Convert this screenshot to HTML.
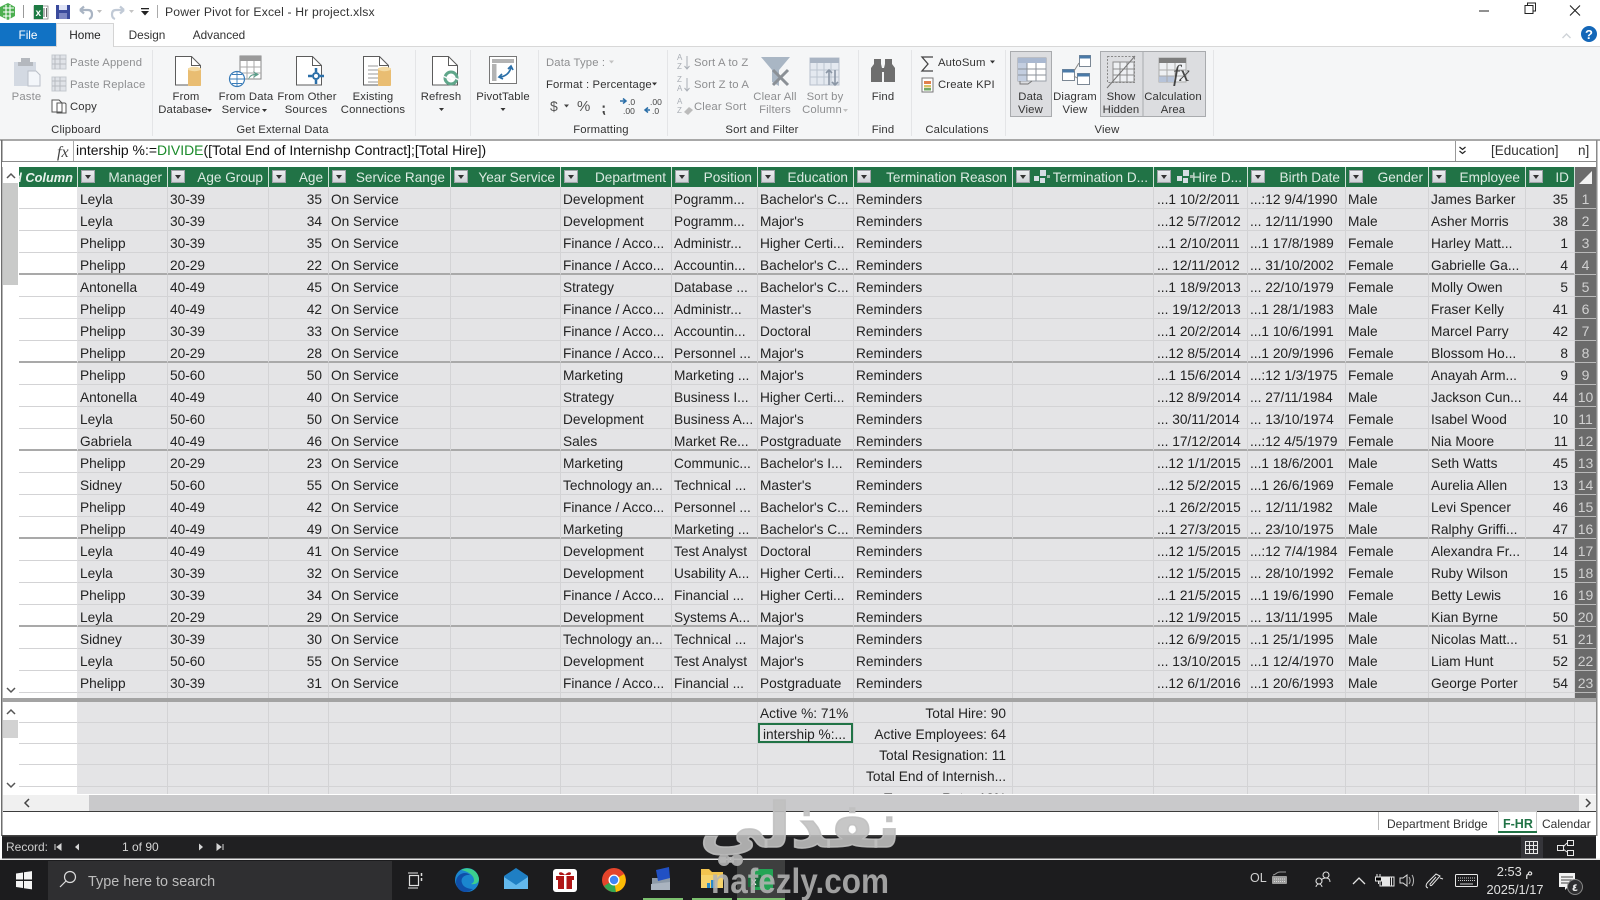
<!DOCTYPE html>
<html><head><meta charset="utf-8"><title>Power Pivot for Excel - Hr project.xlsx</title>
<style>
html,body{margin:0;padding:0;background:#fff;}
body{width:1600px;height:900px;overflow:hidden;position:relative;font-family:"Liberation Sans","Noto Sans CJK SC",sans-serif;color:#222;}
svg{position:absolute;left:0;top:0;font-family:"Liberation Sans",sans-serif;}
svg text{white-space:pre;}
.r{font-size:11.3px;fill:#333;letter-spacing:.15px;}
.g{font-size:11.3px;fill:#8e8f91;letter-spacing:.15px;}
.m{text-anchor:middle;}
.wrap{position:absolute;overflow:hidden;left:19px;width:1577px;}
table{border-collapse:separate;border-spacing:0;table-layout:fixed;width:1577px;}
td,th{box-sizing:border-box;white-space:nowrap;overflow:hidden;font-weight:normal;}
td{height:22px;padding:4px 3px 0 2px;font-size:13.7px;line-height:17px;vertical-align:top;background:#e4e4e6;border-right:1px solid #d3d3d5;border-bottom:1px solid #d3d3d5;text-align:left;color:#222;}
td:nth-child(1){background:#fff;border-right:1px solid #e4e4e6;}
td:nth-child(4),td:nth-child(16){text-align:right;padding-right:6px;}
td:nth-child(12){padding-left:3px;}
td:nth-child(17){background:#6b6b6b;color:#d0d0d0;text-align:center;padding:4px 0 0;font-size:14px;border-right:0;border-bottom:1px solid #b9b9b9;}
tr.k td{border-bottom-color:#a9a9a9;box-shadow:inset 0 -1px 0 #a9a9a9;}
tr.k td:nth-child(17){border-bottom-color:#b9b9b9;box-shadow:none;}
th{height:20px;padding:0 5px 0 3px;font-size:13.6px;line-height:19px;background:#217346;color:#dceae2;text-align:right;border-right:1px solid #cfe0d6;position:relative;}
th:nth-child(17){background:#6b6b6b;border-right:0;padding:0;}
th i{position:absolute;left:3px;top:3px;width:14px;height:13px;box-sizing:border-box;background:linear-gradient(#eceef1,#cfd1d6);border:1px solid #9fa3a8;}
th i::after{content:"";position:absolute;left:3px;top:4px;border:3.5px solid transparent;border-top:4px solid #333;border-bottom:0;}
#c td{height:21px;padding-top:2.5px;background:#e4e4e6;}
#c td:nth-child(1){background:#fff;}
#c td:nth-child(17){background:#e4e4e6;border-bottom:1px solid #d3d3d5;}
#c td.x{text-align:right;padding-right:6px;}
#c tr.t td{height:22px;}
</style></head><body>

<svg width="1600" height="900" viewBox="0 0 1600 900">
<rect width="1600" height="900" fill="#fff"/>
<!-- ribbon bg -->
<rect x="0" y="47" width="1600" height="92" fill="#f5f6f7"/>
<rect x="0" y="46" width="1600" height="1" fill="#d8d8d8"/>
<rect x="0" y="139" width="1600" height="2" fill="#a8a8a8"/>
<g fill="#e4e5e7"><rect x="152" y="50" width="1" height="86"/><rect x="415" y="50" width="1" height="86"/><rect x="470" y="50" width="1" height="86"/><rect x="538" y="50" width="1" height="86"/><rect x="667" y="50" width="1" height="86"/><rect x="858" y="50" width="1" height="86"/><rect x="911" y="50" width="1" height="86"/><rect x="1005" y="50" width="1" height="86"/><rect x="1213" y="50" width="1" height="86"/></g>
<!-- title bar -->
<g>
<path d="M8 3l7 4v9l-7 4-8-4V7z" fill="#4caf50"/><path d="M3 8h11M3 12h11M3 16h8M6 5v14M10 5v14" stroke="#fff" stroke-width="1.1" fill="none"/>
<rect x="23" y="5" width="1" height="13" fill="#999"/>
<rect x="34" y="6" width="14" height="13" fill="#fff" stroke="#666" stroke-width=".6"/><rect x="34" y="5" width="9" height="14" fill="#1d7a43"/><text x="35.5" y="16" font-size="10" font-weight="bold" fill="#fff">x</text><path d="M44 8v9M46.5 8v9" stroke="#666"/>
<rect x="56" y="5" width="14" height="14" fill="#3a4a9c"/><rect x="59" y="5" width="8" height="5" fill="#dfe3f5"/><rect x="59" y="13" width="8" height="6" fill="#7d87c4"/>
<path d="M80 10l4-3.5M80 10l4 3.5M80.5 10H88c3 0 4 2 4 4.5s-1.5 4-3 4.500" stroke="#a9b4c3" stroke-width="2.200" fill="none"/><path d="M97 11l5 0-2.500 3z" fill="#bdbdbd" transform="translate(0,-1)"/>
<path d="M124 10l-4-3.500M124 10l-4 3.500M123.500 10H116c-3 0-4 2-4 4.500s1.500 4 3 4.500" stroke="#c1cad6" stroke-width="2.200" fill="none"/><path d="M129 10l5 0-2.500 3z" fill="#c4c4c4"/>
<rect x="141" y="8" width="8" height="1.300" fill="#222"/><path d="M141 11h8l-4 4.500z" fill="#222"/>
<rect x="157" y="5" width="1" height="13" fill="#aaa"/>
<text x="165" y="16" font-size="12.200" fill="#333" letter-spacing=".15">Power Pivot for Excel - Hr project.xlsx</text>
<rect x="1479" y="10.500" width="10" height="1" fill="#222"/>
<path d="M1525 13.500h8v-8h-8zM1527.500 5.500v-2.500h8v8h-2.500" stroke="#222" fill="none"/>
<path d="M1570 5.500l10 10M1580 5.500l-10 10" stroke="#222" stroke-width="1.100"/>
<path d="M1562.500 38l4-4 4 4" stroke="#cfd3d8" stroke-width="1.400" fill="none"/>
<circle cx="1589" cy="34" r="8" fill="#1467b8"/><text x="1589" y="39" font-size="13" font-weight="bold" fill="#fff" text-anchor="middle">?</text>
</g>
<!-- tabs -->
<rect x="0" y="23" width="56" height="23" fill="#1172c4"/>
<text x="28" y="39" font-size="11.800" fill="#fff" class="m" text-anchor="middle">File</text>
<path d="M56.500 46V23.500h57V47" fill="#f5f6f7" stroke="#d4d4d4"/><rect x="57" y="44" width="56" height="4" fill="#f5f6f7"/>
<text x="85" y="39" font-size="11.800" fill="#222" text-anchor="middle">Home</text>
<text x="147" y="39" font-size="11.800" fill="#333" text-anchor="middle">Design</text>
<text x="219" y="39" font-size="11.800" fill="#333" text-anchor="middle">Advanced</text>

<!-- clipboard -->
<g>
<rect x="14" y="62" width="22" height="24" fill="#d3d9e2"/><rect x="21" y="58" width="9" height="6" fill="#b4b8be"/><rect x="18" y="62" width="15" height="4" fill="#b4b8be"/>
<path d="M28 71h8l4 4v11H28z" fill="#f3f6fa" stroke="#b9bfc8"/>
<text x="26.500" y="100" class="g" text-anchor="middle">Paste</text>
<rect x="52" y="55" width="14" height="14" fill="#e0e3e8" stroke="#c5c9cf"/><path d="M55 55v14M52 59h14M52 64h14M60 55v14" stroke="#b7bbc1"/>
<text x="70" y="66" class="g">Paste Append</text>
<rect x="52" y="77" width="14" height="14" fill="#e0e3e8" stroke="#c5c9cf"/><path d="M55 77v14M52 81h14M52 86h14M60 77v14" stroke="#b7bbc1"/>
<text x="70" y="88" class="g">Paste Replace</text>
<path d="M52 100h7l3 3v9H52zM57 103h8l1 1v9h-9z" fill="#fff" stroke="#555"/>
<text x="70" y="110" class="r">Copy</text>
<text x="76" y="133" class="r" text-anchor="middle">Clipboard</text>
</g>
<!-- doc icons -->
<g stroke="#5c5c5c" fill="#fff">
<path d="M175.500 56.500h16l9 9v19.500h-25z"/><path d="M191.500 56.500v9h9" fill="none"/>
<path d="M296.500 56.500h16l9 9v19.500h-25z"/><path d="M312.500 56.500v9h9" fill="none"/>
<path d="M363.500 56.500h16l9 9v19.500h-25z"/><path d="M379.500 56.500v9h9" fill="none"/>
<path d="M432.500 56.500h16l9 9v19.500h-25z"/><path d="M448.500 56.500v9h9" fill="none"/>
</g>
<path d="M368 66h10M368 70h18M368 74h12M368 78h12M368 82h12" stroke="#9a9a9a"/>
<g fill="#e9bd72"><rect x="188" y="68" width="13" height="18" rx="1"/><ellipse cx="194.500" cy="69" rx="6.500" ry="2.200" fill="#f4dba5"/><rect x="378" y="68" width="13" height="18" rx="1"/><ellipse cx="384.500" cy="69" rx="6.500" ry="2.200" fill="#f4dba5"/></g>
<!-- data service -->
<rect x="240" y="56" width="21" height="23" fill="#fff" stroke="#888"/><rect x="240" y="56" width="21" height="5" fill="#9a9a9a"/><path d="M247 61v18M254 61v18M240 67h21M240 73h21" stroke="#aaa"/>
<circle cx="237" cy="79" r="7.500" fill="#fff" stroke="#3a7cb8" stroke-width="1.200"/><path d="M229.500 79h15M237 71.500v15M232 74.500h10M232 83.500h10" stroke="#3a7cb8" stroke-width=".9"/>
<path d="M248 80c1-4 3-6 7-6l-2-3 6 3.500-6 3.500 2-3c-3 0-5 2-7 5z" fill="#5a9e8a"/>
<!-- other sources -->
<path d="M316 72l4 4-4 4-4-4zM308 72h4" fill="#2b6fa8"/><circle cx="316" cy="76" r="3" fill="#fff" stroke="#2b6fa8" stroke-width="2"/><path d="M316 68v4M316 80v4M308 76h4M320 76h4" stroke="#2b6fa8" stroke-width="2.500"/>
<!-- refresh -->
<circle cx="451" cy="78" r="6" fill="none" stroke="#5fa68a" stroke-width="3"/><path d="M443 76l8 4M459 80l-8-4" stroke="#f5f6f7" stroke-width="1.500"/>
<!-- pivot -->
<rect x="489.500" y="56.500" width="27" height="27" fill="#fff" stroke="#777"/><rect x="492" y="59" width="22" height="4" fill="#b3b3b3"/><rect x="492" y="64" width="4.500" height="17" fill="#b3b3b3"/>
<path d="M499 77c6 0 11-4 12-10M508 69l3-3 2 4M502 74l-3 3 4 2" stroke="#2b6fa8" stroke-width="1.700" fill="none"/>
<!-- Labels -->
<text x="186" y="100" class="r" text-anchor="middle">From</text><text x="183" y="113" class="r" text-anchor="middle">Database</text><path d="M207 109h5l-2.500 3z" fill="#333"/>
<text x="246" y="100" class="r" text-anchor="middle">From Data</text><text x="241" y="113" class="r" text-anchor="middle">Service</text><path d="M262 109h5l-2.500 3z" fill="#333"/>
<text x="307" y="100" class="r" text-anchor="middle">From Other</text><text x="306" y="113" class="r" text-anchor="middle">Sources</text>
<text x="373" y="100" class="r" text-anchor="middle">Existing</text><text x="373" y="113" class="r" text-anchor="middle">Connections</text>
<text x="282.500" y="133" class="r" text-anchor="middle">Get External Data</text>
<text x="441" y="100" class="r" text-anchor="middle">Refresh</text><path d="M439 108h5l-2.500 3z" fill="#333"/>
<text x="503" y="100" class="r" text-anchor="middle">PivotTable</text><path d="M500.500 108h5l-2.500 3z" fill="#333"/>
<!-- formatting -->
<text x="546" y="66" class="g">Data Type :</text><path d="M609 60.500h5l-2.500 3z" fill="#c2c2c2"/>
<text x="546" y="88" class="r">Format : Percentage</text><path d="M652 82.500h5l-2.500 3z" fill="#333"/>
<text x="550" y="111" font-size="14" fill="#555">$</text><path d="M564 104.500h5l-2.500 3z" fill="#444"/>
<text x="577" y="111" font-size="15" fill="#555">%</text>
<text x="601" y="113" font-size="14" font-weight="bold" fill="#444">&#8271;</text>
<path d="M620 101h5M623 98.500l3 2.500-3 2.500" stroke="#2b6fa8" stroke-width="1.500" fill="none"/><text x="628" y="105" font-size="8.500" fill="#444">.0</text><text x="623" y="114" font-size="8.500" fill="#444">.00</text>
<path d="M650 110h-5M648 107.500l-3 2.500 3 2.500" stroke="#2b6fa8" stroke-width="1.500" fill="none"/><text x="650" y="105" font-size="8.500" fill="#444">.00</text><text x="652" y="114" font-size="8.500" fill="#444">.0</text>
<text x="601" y="133" class="r" text-anchor="middle">Formatting</text>
<!-- sort -->
<g font-size="8" fill="#a9aeb5"><text x="677" y="60">A</text><text x="677" y="69">Z</text><text x="677" y="82">Z</text><text x="677" y="91">A</text><text x="677" y="104">A</text><text x="677" y="113">Z</text></g>
<path d="M687 56v13M684.500 66l2.500 3 2.500-3M687 78v13M684.500 88l2.500 3 2.500-3" stroke="#a9aeb5" fill="none"/><path d="M684 112l5-5 4 3-5 5z" fill="#bbb"/>
<text x="694" y="66" class="g">Sort A to Z</text><text x="694" y="88" class="g">Sort Z to A</text><text x="694" y="110" class="g">Clear Sort</text>
<path d="M761 57h29l-11 13v16l-7-4V70z" fill="#a9b6c4"/><path d="M773 70l15 15M788 70l-15 15" stroke="#8b9096" stroke-width="3"/>
<text x="775" y="100" class="g" text-anchor="middle">Clear All</text><text x="775" y="113" class="g" text-anchor="middle">Filters</text>
<rect x="810" y="58" width="29" height="27" fill="#e4e9f0" stroke="#b7c0cc"/><rect x="810" y="58" width="29" height="5" fill="#a9b4c3"/><path d="M817 63v22M824 63v22M831 63v22M810 70h29M810 77h29" stroke="#bcc5d0"/><path d="M829 85V70M826 73l3-3 3 3M835 70v15M832 82l3 3 3-3" stroke="#8a96a5" stroke-width="1.600" fill="none"/>
<text x="825" y="100" class="g" text-anchor="middle">Sort by</text><text x="822" y="113" class="g" text-anchor="middle">Column</text><path d="M843 109h5l-2.500 3z" fill="#c2c2c2"/>
<text x="762" y="133" class="r" text-anchor="middle">Sort and Filter</text>
<!-- find: binoculars -->
<path d="M871 82V68l3-4v-5h7v5l1 4h2l1-4v-5h7v5l3 4v14h-11V72h-2v10z" fill="#6e6e6e"/>
<text x="883" y="100" class="r" text-anchor="middle">Find</text><text x="883" y="133" class="r" text-anchor="middle">Find</text>
<!-- calc -->
<path d="M933 57h-11l6 7-6 7h11" stroke="#444" stroke-width="1.300" fill="none"/>
<text x="938" y="66" class="r">AutoSum</text><path d="M990 60.500h5l-2.500 3z" fill="#333"/>
<rect x="922" y="78" width="11" height="14" fill="#fff" stroke="#777"/><rect x="924" y="81" width="7" height="3" fill="#e07f4c"/><rect x="924" y="85" width="7" height="2.500" fill="#d8c266"/><rect x="924" y="88" width="7" height="2.500" fill="#74a866"/>
<text x="938" y="88" class="r">Create KPI</text>
<text x="957" y="133" class="r" text-anchor="middle">Calculations</text>
<!-- view buttons -->
<rect x="1010.500" y="51.500" width="41" height="65" fill="#dcdde0" stroke="#a9abae"/>
<rect x="1100.500" y="51.500" width="42.500" height="65" fill="#dcdde0" stroke="#a9abae"/>
<rect x="1143" y="51.500" width="62.500" height="65" fill="#dcdde0" stroke="#a9abae"/>
<rect x="1018" y="58" width="28" height="23" fill="#fff" stroke="#9aa0a8"/><rect x="1018" y="58" width="28" height="5" fill="#a9b8d0"/><rect x="1018" y="63" width="9" height="18" fill="#c3cee0"/><path d="M1027 63v18M1036 63v18M1018 69h28M1018 75h28" stroke="#8b919a"/><path d="M1020 81v3h8l4-3" fill="none" stroke="#777"/>
<text x="1030.500" y="100" class="r" text-anchor="middle">Data</text><text x="1030.500" y="113" class="r" text-anchor="middle">View</text>
<rect x="1062.500" y="69.500" width="12" height="11" fill="#fff" stroke="#7b8794"/><rect x="1062.500" y="69.500" width="12" height="3" fill="#4a7aa8"/>
<rect x="1079.500" y="55.500" width="11" height="11" fill="#fff" stroke="#7b8794"/><rect x="1079.500" y="55.500" width="11" height="3" fill="#4a7aa8"/>
<rect x="1077.500" y="73.500" width="12" height="11" fill="#fff" stroke="#7b8794"/><rect x="1077.500" y="73.500" width="12" height="3" fill="#4a7aa8"/>
<path d="M1074 71l5-8M1074 76l3 2" stroke="#888"/>
<text x="1075" y="100" class="r" text-anchor="middle">Diagram</text><text x="1075" y="113" class="r" text-anchor="middle">View</text>
<rect x="1107.500" y="56.500" width="27" height="26" fill="none" stroke="#888" stroke-dasharray="2 1.500"/><rect x="1113" y="62" width="21" height="20" fill="#eef0f3" stroke="#8c8c8c"/><path d="M1120 62v20M1127 62v20M1113 69h21M1113 75h21" stroke="#8c8c8c"/><path d="M1107 88l28-32" stroke="#777"/>
<text x="1121" y="100" class="r" text-anchor="middle">Show</text><text x="1121" y="113" class="r" text-anchor="middle">Hidden</text>
<rect x="1159" y="58" width="27" height="24" fill="#eef0f3" stroke="#aaa"/><rect x="1159" y="58" width="27" height="5" fill="#7d7d7d"/><rect x="1159" y="76" width="15" height="6" fill="#b6c3d9"/><path d="M1167 63v19M1175 63v19M1159 70h27M1159 76h27" stroke="#aaa"/>
<text x="1173" y="81" font-family="Liberation Serif" font-style="italic" font-size="23" fill="#444">fx</text>
<text x="1173" y="100" class="r" text-anchor="middle">Calculation</text><text x="1173" y="113" class="r" text-anchor="middle">Area</text>
<text x="1107" y="133" class="r" text-anchor="middle">View</text>

<!-- formula bar -->
<rect x="2" y="141" width="1594" height="20.500" fill="#fff"/>
<rect x="2" y="161" width="1594" height="1" fill="#8a8a8a"/>
<rect x="1" y="140" width="1.500" height="696" fill="#6e6e6e"/><rect x="1596" y="140" width="1.500" height="696" fill="#8a8a8a"/>
<rect x="73" y="141" width="1" height="20" fill="#aaa"/>
<text x="57" y="157" font-family="Liberation Serif" font-style="italic" font-size="16" fill="#444">fx</text>
<text x="76" y="155" font-size="13.950" fill="#111">intership %:=<tspan fill="#1a8a2a">DIVIDE</tspan>([Total End of Internishp Contract];[Total Hire])</text>
<rect x="1455" y="141" width="1" height="20" fill="#999"/>
<path d="M1459.500 147l3 2.500 3-2.500M1459.500 151l3 2.500 3-2.500" stroke="#222" stroke-width="1.200" fill="none"/>
<text x="1491" y="155" font-size="13.500" fill="#333">[Education]</text><text x="1578" y="155" font-size="13.500" fill="#333">n]</text>
<rect x="2" y="162" width="1594" height="5" fill="#fff"/>

<!-- main left scrollbar -->
<rect x="3" y="167" width="16" height="531" fill="#fff"/>
<path d="M7 178l4-4 4 4" stroke="#555" stroke-width="1.500" fill="none"/>
<rect x="3" y="183" width="15" height="102" fill="#c9cac9"/>
<path d="M7 688l4 4 4-4" stroke="#555" stroke-width="1.500" fill="none"/>
<rect x="2" y="698" width="1594" height="4" fill="#a3a3a3"/>
<!-- calc left scrollbar -->
<rect x="3" y="702" width="16" height="92" fill="#fff"/>
<path d="M7 714l4-4 4 4M7 783l4 4 4-4" stroke="#555" stroke-width="1.500" fill="none"/>
<rect x="3" y="720" width="15" height="18" fill="#d2d2d2"/>
<!-- h scrollbar -->
<rect x="3" y="794" width="1593" height="1" fill="#fff"/>
<rect x="3" y="795" width="1593" height="16" fill="#f0f0f0"/>
<rect x="89" y="795" width="1490" height="16" fill="#c9c9cb"/>
<path d="M29 799l-4 4 4 4M1586 799l4 4-4 4" stroke="#444" stroke-width="1.500" fill="none"/>
<rect x="3" y="811" width="1593" height="1" fill="#3c3c3c"/>
<!-- bottom tabs -->
<rect x="1378" y="812" width="1" height="18" fill="#bbb"/>
<text x="1387" y="828" font-size="12" fill="#333">Department Bridge</text>
<path d="M1498.500 832V811.500h38V832" fill="#fff" stroke="#c9c9c9"/><rect x="1498" y="831" width="39" height="2" fill="#217346"/>
<text x="1503" y="828" font-size="12.500" font-weight="bold" fill="#217346">F-HR</text>
<text x="1542" y="828" font-size="12" fill="#333">Calendar</text>
<!-- record bar -->
<rect x="2" y="835" width="1594" height="1.500" fill="#444"/>
<rect x="2" y="836.500" width="1594" height="22" fill="#202022"/>
<rect x="0" y="858.500" width="1600" height="1.500" fill="#e8e8e8"/>
<text x="6" y="851" font-size="12" fill="#cfcfcf">Record:</text>
<path d="M55 844v6M61 844v6l-4-3z" stroke="#d6d6d6" fill="#d6d6d6"/><path d="M79 843.500v7l-4-3.500z" fill="#d6d6d6"/>
<text x="122" y="851" font-size="12" fill="#d6d6d6">1 of 90</text>
<path d="M199 843.500v7l4-3.500z" fill="#d6d6d6"/><path d="M217 844v6l4-3zM223 844v6" stroke="#d6d6d6" fill="#d6d6d6"/>
<rect x="1521" y="837" width="22" height="21" fill="#35353a"/>
<rect x="1525.500" y="841.500" width="12" height="12" fill="none" stroke="#e8e8e8"/><path d="M1529.500 841.500v12M1533.500 841.500v12M1525.500 845.500h12M1525.500 849.500h12" stroke="#e8e8e8"/>
<rect x="1557.500" y="845.500" width="6" height="5" fill="none" stroke="#e8e8e8"/><rect x="1567.500" y="840.500" width="6" height="5" fill="none" stroke="#e8e8e8"/><rect x="1567.500" y="850.500" width="6" height="5" fill="none" stroke="#e8e8e8"/><path d="M1563 847l4-4M1563 849l4 3" stroke="#e8e8e8"/>
<!-- taskbar -->
<rect x="0" y="860" width="1600" height="40" fill="#1c1c1e"/>
<path d="M16 873.500l7-1v7h-7zM24 872.300l8-1.200v8.400h-8zM16 881h7v7l-7-1zM24 881h8v8.400l-8-1.200z" fill="#f4f4f4"/>
<rect x="48" y="861" width="344" height="39" fill="#2f2f31"/>
<circle cx="70" cy="877" r="5.500" fill="none" stroke="#dcdcdc" stroke-width="1.200"/><path d="M66 881l-6 6" stroke="#dcdcdc" stroke-width="1.200"/>
<text x="88" y="886" font-size="14.400" fill="#bdbdbd">Type here to search</text>
<path d="M408 873h10M408 888h10" stroke="#e0e0e0"/><rect x="409.500" y="875.500" width="9" height="10" fill="none" stroke="#e0e0e0" stroke-width="1.200"/><path d="M421.500 873v3M421.500 878v3" stroke="#e0e0e0" stroke-width="1.500"/>
<!-- edge -->
<circle cx="467" cy="880" r="12" fill="#1a86cf"/>
<path d="M461 870a12 12 0 0 1 18 9c0 4-4 6-8 5 2-1 3-2 3-4 0-5-7-9-13-10z" fill="#3ccf8e"/>
<path d="M456 882c0-5 4-9 9-9 2 0 4 1 5 2-5-1-10 3-8 8 1 4 6 6 11 6-3 2-5 3-8 3-5 0-9-5-9-10z" fill="#0f4fa8"/>
<path d="M504 876l12-8 12 8v13h-24z" fill="#1f7fc4"/><path d="M504 877l12 8 12-8v12h-24z" fill="#63b8ec"/>
<rect x="553" y="869" width="24" height="23" rx="3" fill="#fff"/><rect x="556" y="876" width="18" height="4" fill="#b01616"/><rect x="558" y="880" width="14" height="9" fill="#b01616"/><rect x="564" y="875" width="2.500" height="14" fill="#fff"/><path d="M565 875c-4-5-8-2-5 0zM565 875c4-5 8-2 5 0z" fill="#b01616"/>
<circle cx="614" cy="880" r="12" fill="#e4442b"/><path d="M614 880L604 886a12 12 0 0 0 12 6z" fill="#34a853"/><path d="M614 880l10-6a12 12 0 0 1-8 18z" fill="#fbbc05"/><circle cx="614" cy="880" r="5.500" fill="#fff"/><circle cx="614" cy="880" r="4.200" fill="#4285f4"/>
<rect x="652" y="878" width="18" height="12" fill="#8d9aa8"/><path d="M656 870l13-3 1 11-12 3z" fill="#2150c4"/><path d="M651 884l19-2v8h-19z" fill="#aab4c0"/>
<path d="M701 869h8l3 3h11v16h-22z" fill="#f2c44f"/><rect x="701" y="875" width="22" height="13" fill="#f6d36b"/><rect x="711" y="880" width="4" height="8" fill="#2a8ac8"/><rect x="707" y="883" width="3" height="5" fill="#2a8ac8"/>
<rect x="737" y="860" width="48" height="40" fill="#3e3f3f"/>
<rect x="752" y="869" width="21" height="21" rx="1" fill="#23a455"/><rect x="748" y="875" width="13" height="12" fill="#186b3a"/><text x="751" y="885" font-size="10" font-weight="bold" fill="#fff">x</text>
<rect x="643" y="898" width="40" height="2" fill="#7cc06f"/><rect x="692" y="898" width="40" height="2" fill="#7cc06f"/><rect x="737" y="898" width="48" height="2" fill="#7cc06f"/>
<!-- tray -->
<text x="1250" y="882" font-size="12.500" fill="#cfcfcf">OL</text>
<rect x="1272" y="876" width="15" height="8" rx="1" fill="#9c9c9c"/><path d="M1273 875c3 0 3-3 7-3h6" stroke="#999" fill="none"/><path d="M1274 879h11M1274 881.500h11" stroke="#d8d8d8" stroke-dasharray="1 1"/>
<circle cx="1326" cy="875" r="3" fill="none" stroke="#ddd" stroke-width="1.100"/><circle cx="1319" cy="881" r="3" fill="none" stroke="#ddd" stroke-width="1.100"/><path d="M1316 887c0-2 2-3 3-3s3 1 3 3M1321 880c1-1 3-2 5-2 3 0 4 2 4 4" stroke="#ddd" fill="none"/>
<path d="M1353 884l6-6 6 6" stroke="#e4e4e4" stroke-width="1.300" fill="none"/>
<rect x="1382" y="877" width="8" height="9" fill="#e6e6e6"/><rect x="1391" y="877" width="1" height="9" fill="#e6e6e6"/><rect x="1380" y="877" width="14" height="9" fill="none" stroke="#e6e6e6"/><path d="M1377 874v3M1380 874v3M1375.500 877h6v4h-6zM1378.500 881v3" stroke="#e6e6e6"/>
<path d="M1400 878h3l4-3v11l-4-3h-3z" fill="none" stroke="#e0e0e0"/><path d="M1409 877c1.500 2 1.500 5 0 7M1412 875c2 3 2 8 0 11" stroke="#bbb" fill="none"/>
<path d="M1428 888c-3-1-2-4 0-6l8-8 4 2-8 9c-1 1-2 1-2-1l6-7M1440 878l3 1" stroke="#e4e4e4" fill="none"/>
<rect x="1455.500" y="874.500" width="22" height="12" rx="1" fill="none" stroke="#eaeaea"/><path d="M1458 878h17M1458 880.500h17" stroke="#d0d0d0" stroke-dasharray="1 1"/><path d="M1460 884h13" stroke="#d0d0d0"/>
<text x="1515" y="876" font-size="12.800" fill="#e0e0e0" text-anchor="middle" font-family="Liberation Sans,Noto Sans CJK SC,DejaVu Sans">2:53 &#1605;</text>
<text x="1515" y="894" font-size="12.800" fill="#e0e0e0" text-anchor="middle">2025/1/17</text>
<path d="M1559 873h16v14h-7l-3 3v-3h-6z" fill="#f2f2f2"/><path d="M1561 877h12M1561 880h12M1561 883h8" stroke="#444"/>
<circle cx="1575" cy="887" r="7.500" fill="#2f2f31" stroke="#888"/><text x="1575" y="891" font-size="10.500" font-weight="bold" fill="#eee" text-anchor="middle" font-family="DejaVu Sans">&#1636;</text>
</svg>

<div class="wrap" style="top:167px;height:531px;">
<table>
<colgroup><col style="width:59px"><col style="width:90px"><col style="width:101px"><col style="width:60px"><col style="width:122px"><col style="width:110px"><col style="width:111px"><col style="width:86px"><col style="width:96px"><col style="width:159px"><col style="width:141px"><col style="width:94px"><col style="width:98px"><col style="width:83px"><col style="width:97px"><col style="width:49px"><col style="width:21px"></colgroup>
<tr><th></th><th><i></i>Manager</th><th><i></i>Age Group</th><th><i></i>Age</th><th><i></i>Service Range</th><th><i></i>Year Service</th><th><i></i>Department</th><th><i></i>Position</th><th><i></i>Education</th><th><i></i>Termination Reason</th><th><i></i>Termination D...</th><th><i></i>Hire D...</th><th><i></i>Birth Date</th><th><i></i>Gender</th><th><i></i>Employee</th><th><i></i>ID</th><th></th></tr>
<tr><td></td><td>Leyla</td><td>30-39</td><td>35</td><td>On Service</td><td></td><td>Development</td><td>Pogramm...</td><td>Bachelor's C...</td><td>Reminders</td><td></td><td>...1 10/2/2011</td><td>...:12 9/4/1990</td><td>Male</td><td>James Barker</td><td>35</td><td>1</td></tr>
<tr><td></td><td>Leyla</td><td>30-39</td><td>34</td><td>On Service</td><td></td><td>Development</td><td>Pogramm...</td><td>Major's</td><td>Reminders</td><td></td><td>...12 5/7/2012</td><td>... 12/11/1990</td><td>Male</td><td>Asher Morris</td><td>38</td><td>2</td></tr>
<tr><td></td><td>Phelipp</td><td>30-39</td><td>35</td><td>On Service</td><td></td><td>Finance / Acco...</td><td>Administr...</td><td>Higher Certi...</td><td>Reminders</td><td></td><td>...1 2/10/2011</td><td>...1 17/8/1989</td><td>Female</td><td>Harley Matt...</td><td>1</td><td>3</td></tr>
<tr class="k"><td></td><td>Phelipp</td><td>20-29</td><td>22</td><td>On Service</td><td></td><td>Finance / Acco...</td><td>Accountin...</td><td>Bachelor's C...</td><td>Reminders</td><td></td><td>... 12/11/2012</td><td>... 31/10/2002</td><td>Female</td><td>Gabrielle Ga...</td><td>4</td><td>4</td></tr>
<tr><td></td><td>Antonella</td><td>40-49</td><td>45</td><td>On Service</td><td></td><td>Strategy</td><td>Database ...</td><td>Bachelor's C...</td><td>Reminders</td><td></td><td>...1 18/9/2013</td><td>... 22/10/1979</td><td>Female</td><td>Molly Owen</td><td>5</td><td>5</td></tr>
<tr><td></td><td>Phelipp</td><td>40-49</td><td>42</td><td>On Service</td><td></td><td>Finance / Acco...</td><td>Administr...</td><td>Master's</td><td>Reminders</td><td></td><td>... 19/12/2013</td><td>...1 28/1/1983</td><td>Male</td><td>Fraser Kelly</td><td>41</td><td>6</td></tr>
<tr><td></td><td>Phelipp</td><td>30-39</td><td>33</td><td>On Service</td><td></td><td>Finance / Acco...</td><td>Accountin...</td><td>Doctoral</td><td>Reminders</td><td></td><td>...1 20/2/2014</td><td>...1 10/6/1991</td><td>Male</td><td>Marcel Parry</td><td>42</td><td>7</td></tr>
<tr class="k"><td></td><td>Phelipp</td><td>20-29</td><td>28</td><td>On Service</td><td></td><td>Finance / Acco...</td><td>Personnel ...</td><td>Major's</td><td>Reminders</td><td></td><td>...12 8/5/2014</td><td>...1 20/9/1996</td><td>Female</td><td>Blossom Ho...</td><td>8</td><td>8</td></tr>
<tr><td></td><td>Phelipp</td><td>50-60</td><td>50</td><td>On Service</td><td></td><td>Marketing</td><td>Marketing ...</td><td>Major's</td><td>Reminders</td><td></td><td>...1 15/6/2014</td><td>...:12 1/3/1975</td><td>Female</td><td>Anayah Arm...</td><td>9</td><td>9</td></tr>
<tr><td></td><td>Antonella</td><td>40-49</td><td>40</td><td>On Service</td><td></td><td>Strategy</td><td>Business I...</td><td>Higher Certi...</td><td>Reminders</td><td></td><td>...12 8/9/2014</td><td>... 27/11/1984</td><td>Male</td><td>Jackson Cun...</td><td>44</td><td>10</td></tr>
<tr><td></td><td>Leyla</td><td>50-60</td><td>50</td><td>On Service</td><td></td><td>Development</td><td>Business A...</td><td>Major's</td><td>Reminders</td><td></td><td>... 30/11/2014</td><td>... 13/10/1974</td><td>Female</td><td>Isabel Wood</td><td>10</td><td>11</td></tr>
<tr class="k"><td></td><td>Gabriela</td><td>40-49</td><td>46</td><td>On Service</td><td></td><td>Sales</td><td>Market Re...</td><td>Postgraduate</td><td>Reminders</td><td></td><td>... 17/12/2014</td><td>...:12 4/5/1979</td><td>Female</td><td>Nia Moore</td><td>11</td><td>12</td></tr>
<tr><td></td><td>Phelipp</td><td>20-29</td><td>23</td><td>On Service</td><td></td><td>Marketing</td><td>Communic...</td><td>Bachelor's I...</td><td>Reminders</td><td></td><td>...12 1/1/2015</td><td>...1 18/6/2001</td><td>Male</td><td>Seth Watts</td><td>45</td><td>13</td></tr>
<tr><td></td><td>Sidney</td><td>50-60</td><td>55</td><td>On Service</td><td></td><td>Technology an...</td><td>Technical ...</td><td>Master's</td><td>Reminders</td><td></td><td>...12 5/2/2015</td><td>...1 26/6/1969</td><td>Female</td><td>Aurelia Allen</td><td>13</td><td>14</td></tr>
<tr><td></td><td>Phelipp</td><td>40-49</td><td>42</td><td>On Service</td><td></td><td>Finance / Acco...</td><td>Personnel ...</td><td>Bachelor's C...</td><td>Reminders</td><td></td><td>...1 26/2/2015</td><td>... 12/11/1982</td><td>Male</td><td>Levi Spencer</td><td>46</td><td>15</td></tr>
<tr class="k"><td></td><td>Phelipp</td><td>40-49</td><td>49</td><td>On Service</td><td></td><td>Marketing</td><td>Marketing ...</td><td>Bachelor's C...</td><td>Reminders</td><td></td><td>...1 27/3/2015</td><td>... 23/10/1975</td><td>Male</td><td>Ralphy Griffi...</td><td>47</td><td>16</td></tr>
<tr><td></td><td>Leyla</td><td>40-49</td><td>41</td><td>On Service</td><td></td><td>Development</td><td>Test Analyst</td><td>Doctoral</td><td>Reminders</td><td></td><td>...12 1/5/2015</td><td>...:12 7/4/1984</td><td>Female</td><td>Alexandra Fr...</td><td>14</td><td>17</td></tr>
<tr><td></td><td>Leyla</td><td>30-39</td><td>32</td><td>On Service</td><td></td><td>Development</td><td>Usability A...</td><td>Higher Certi...</td><td>Reminders</td><td></td><td>...12 1/5/2015</td><td>... 28/10/1992</td><td>Female</td><td>Ruby Wilson</td><td>15</td><td>18</td></tr>
<tr><td></td><td>Phelipp</td><td>30-39</td><td>34</td><td>On Service</td><td></td><td>Finance / Acco...</td><td>Financial ...</td><td>Higher Certi...</td><td>Reminders</td><td></td><td>...1 21/5/2015</td><td>...1 19/6/1990</td><td>Female</td><td>Betty Lewis</td><td>16</td><td>19</td></tr>
<tr class="k"><td></td><td>Leyla</td><td>20-29</td><td>29</td><td>On Service</td><td></td><td>Development</td><td>Systems A...</td><td>Major's</td><td>Reminders</td><td></td><td>...12 1/9/2015</td><td>... 13/11/1995</td><td>Male</td><td>Kian Byrne</td><td>50</td><td>20</td></tr>
<tr><td></td><td>Sidney</td><td>30-39</td><td>30</td><td>On Service</td><td></td><td>Technology an...</td><td>Technical ...</td><td>Major's</td><td>Reminders</td><td></td><td>...12 6/9/2015</td><td>...1 25/1/1995</td><td>Male</td><td>Nicolas Matt...</td><td>51</td><td>21</td></tr>
<tr><td></td><td>Leyla</td><td>50-60</td><td>55</td><td>On Service</td><td></td><td>Development</td><td>Test Analyst</td><td>Major's</td><td>Reminders</td><td></td><td>... 13/10/2015</td><td>...1 12/4/1970</td><td>Male</td><td>Liam Hunt</td><td>52</td><td>22</td></tr>
<tr><td></td><td>Phelipp</td><td>30-39</td><td>31</td><td>On Service</td><td></td><td>Finance / Acco...</td><td>Financial ...</td><td>Postgraduate</td><td>Reminders</td><td></td><td>...12 6/1/2016</td><td>...1 20/6/1993</td><td>Male</td><td>George Porter</td><td>54</td><td>23</td></tr>
<tr><td></td><td></td><td></td><td></td><td></td><td></td><td></td><td></td><td></td><td></td><td></td><td></td><td></td><td></td><td></td><td></td><td></td></tr>
</table>
</div>

<div class="wrap" style="top:702px;height:92px;">
<table id="c">
<colgroup><col style="width:59px"><col style="width:90px"><col style="width:101px"><col style="width:60px"><col style="width:122px"><col style="width:110px"><col style="width:111px"><col style="width:86px"><col style="width:96px"><col style="width:159px"><col style="width:141px"><col style="width:94px"><col style="width:98px"><col style="width:83px"><col style="width:97px"><col style="width:49px"><col style="width:21px"></colgroup>
<tr><td></td><td></td><td></td><td></td><td></td><td></td><td></td><td></td><td class="x" style="padding-right:9px">Active %: 71%</td><td class="x">Total Hire: 90</td><td></td><td></td><td></td><td></td><td></td><td></td><td></td></tr>
<tr><td></td><td></td><td></td><td></td><td></td><td></td><td></td><td></td><td style="box-shadow:inset 0 0 0 2px #217346;padding-left:5px;">intership %:...</td><td class="x">Active Employees: 64</td><td></td><td></td><td></td><td></td><td></td><td></td><td></td></tr>
<tr><td></td><td></td><td></td><td></td><td></td><td></td><td></td><td></td><td></td><td class="x">Total Resignation: 11</td><td></td><td></td><td></td><td></td><td></td><td></td><td></td></tr>
<tr class="t"><td></td><td></td><td></td><td></td><td></td><td></td><td></td><td></td><td></td><td class="x">Total End of Internish...</td><td></td><td></td><td></td><td></td><td></td><td></td><td></td></tr>
<tr><td></td><td></td><td></td><td></td><td></td><td></td><td></td><td></td><td></td><td class="x">Turnover Rate: 12%</td><td></td><td></td><td></td><td></td><td></td><td></td><td></td></tr>
</table>
</div>

<svg width="1600" height="900" viewBox="0 0 1600 900" style="z-index:5;pointer-events:none;">
<!-- Add Column clipped -->
<clipPath id="cc"><rect x="19" y="167" width="57" height="20"/></clipPath>
<g clip-path="url(#cc)"><text x="73" y="182" font-size="12.800" font-style="italic" font-weight="bold" fill="#e8f2ec" text-anchor="end">Add Column</text></g>
<!-- corner triangle -->
<path d="M1579 184l13-13v13z" fill="#f2f2f2"/>
<!-- key icons in header -->
<g fill="#d5dde2"><rect x="1034" y="176" width="5" height="5"/><rect x="1040" y="170" width="6" height="6"/><rect x="1040" y="178" width="5" height="5"/><rect x="1047" y="175" width="3" height="3" fill="#9db8a8"/></g>
<g fill="#d5dde2"><rect x="1177" y="176" width="5" height="5"/><rect x="1183" y="170" width="6" height="6"/><rect x="1183" y="178" width="5" height="5"/><rect x="1190" y="175" width="3" height="3" fill="#9db8a8"/></g>
<!-- watermark -->
<g font-family="DejaVu Sans,Noto Sans CJK SC,sans-serif" font-weight="bold">
<text x="0" y="0" transform="translate(800,847) scale(1.06,1)" font-size="62" fill="#bfbfbf" fill-opacity=".88" stroke="#bfbfbf" stroke-opacity=".88" stroke-width="1.500" text-anchor="middle" direction="rtl">&#1606;&#1601;&#1584;&#1604;&#1610;</text>
</g>
<circle cx="724" cy="860" r="6" fill="#b4b4b4" fill-opacity=".9"/><circle cx="737" cy="860" r="6" fill="#b4b4b4" fill-opacity=".9"/>
<text x="800" y="893" font-family="Liberation Sans,sans-serif" font-size="35" font-weight="bold" fill="#b3b3b3" fill-opacity=".88" text-anchor="middle" textLength="178" lengthAdjust="spacingAndGlyphs">nafezly.com</text>
</svg>
</body></html>
